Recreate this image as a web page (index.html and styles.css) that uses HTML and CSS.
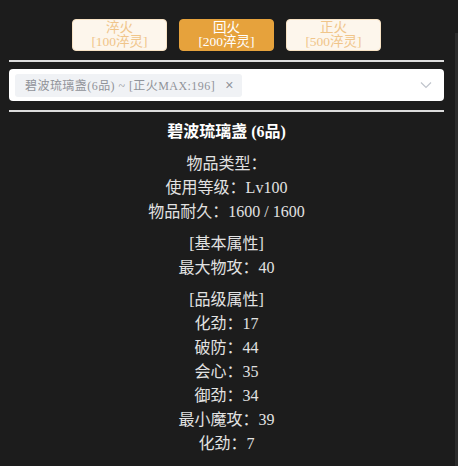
FILE: index.html
```html
<!DOCTYPE html>
<html lang="zh">
<head>
<meta charset="utf-8">
<link rel="stylesheet" href="styles.css">
</head>
<body>
<div class="scroll-strip"></div>
<div class="page">
  <div class="btn-row">
    <button class="btn btn-plain">淬火<br>[100淬灵]</button>
    <button class="btn btn-active">回火<br>[200淬灵]</button>
    <button class="btn btn-plain">正火<br>[500淬灵]</button>
  </div>
  <div class="rule"></div>
  <div class="select">
    <span class="tag">碧波琉璃盏(6品) ~ [正火MAX:196]<span class="tag-close">×</span></span>
    <svg class="arrow" width="12" height="8" viewBox="0 0 12 8"><path d="M1 1.5 L6 6.5 L11 1.5" fill="none" stroke="#c0c4cc" stroke-width="1.2"/></svg>
  </div>
  <div class="rule rule-bottom"></div>
  <div class="info">
    <div class="title">碧波琉璃盏 (6品)</div>
    <div class="section">
      <div class="line">物品类型：</div>
      <div class="line">使用等级：Lv100</div>
      <div class="line">物品耐久：1600 / 1600</div>
    </div>
    <div class="section">
      <div class="line">[基本属性]</div>
      <div class="line">最大物攻：40</div>
    </div>
    <div class="section">
      <div class="line">[品级属性]</div>
      <div class="line">化劲：17</div>
      <div class="line">破防：44</div>
      <div class="line">会心：35</div>
      <div class="line">御劲：34</div>
      <div class="line">最小魔攻：39</div>
      <div class="line">化劲：7</div>
    </div>
  </div>
</div>
</body>
</html>
```

FILE: styles.css
```css
html, body {
  margin: 0;
  padding: 0;
  background: #1c1c1c;
  height: 100%;
  overflow: hidden;
}
body {
  font-family: "Liberation Serif", "Noto Sans CJK SC", serif;
  color: #e2e2e2;
}
.scroll-strip {
  position: fixed;
  right: 0;
  top: 33px;
  bottom: 0;
  width: 3px;
  background: #2c2c2c;
}
.page {
  width: 435px;
  margin-left: 9px;
  padding-top: 19px;
}
.btn-row {
  display: flex;
  justify-content: center;
  gap: 12px;
}
.btn {
  width: 95px;
  height: 32px;
  padding: 0;
  border-radius: 4px;
  font-family: "Liberation Serif", "Noto Sans CJK SC", serif;
  font-size: 13.5px;
  line-height: 14px;
  cursor: pointer;
}
.btn-plain {
  background: #fdf6ec;
  border: 1px solid #f8e3c5;
  color: #f0c58a;
}
.btn-active {
  background: #e6a23c;
  border: 1px solid #e6a23c;
  color: #ffffff;
}
.rule {
  height: 2px;
  background: #dcdcdc;
  margin-top: 9px;
}
.rule-bottom {
  margin-top: 9px;
}
.select {
  margin-top: 7px;
  height: 32px;
  background: #ffffff;
  border-radius: 4px;
  display: flex;
  align-items: center;
  padding-left: 6px;
  padding-right: 12px;
  box-sizing: border-box;
}
.tag {
  display: flex;
  align-items: center;
  height: 23px;
  box-sizing: border-box;
  padding: 0 9px 0 10px;
  background: #f0f2f5;
  border-radius: 3px;
  font-size: 12px;
  letter-spacing: 0.45px;
  color: #909399;
  white-space: nowrap;
}
.tag-close {
  margin-left: 10px;
  font-family: "Liberation Sans", sans-serif;
  font-size: 14px;
  letter-spacing: 0;
  color: #909399;
}
.arrow {
  margin-left: auto;
}
.info {
  text-align: center;
  font-size: 16px;
  line-height: 24px;
  padding-top: 8px;
}
.title {
  font-weight: bold;
  color: #ffffff;
}
.section {
  margin-top: 8px;
}
```
